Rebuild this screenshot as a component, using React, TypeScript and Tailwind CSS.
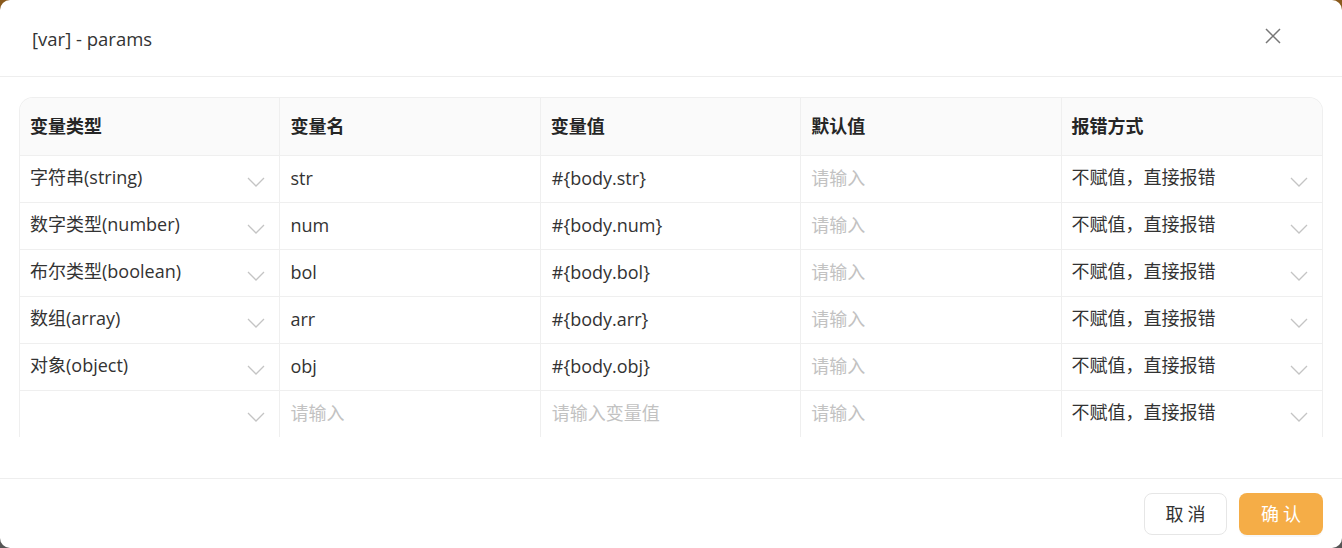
import React from "react";

const font = { fontFamily: '"Open Sans", "Noto Sans CJK SC", sans-serif' };

const Chevron = () => (
  <svg width="18" height="10" viewBox="0 0 18 10" fill="none" className="shrink-0">
    <path d="M1 1 L9 9 L17 1" stroke="#c4c4c4" strokeWidth="1.3" />
  </svg>
);

type Row = { type: string; name: string; value: string };
const rows: Row[] = [
  { type: "字符串(string)", name: "str", value: "#{body.str}" },
  { type: "数字类型(number)", name: "num", value: "#{body.num}" },
  { type: "布尔类型(boolean)", name: "bol", value: "#{body.bol}" },
  { type: "数组(array)", name: "arr", value: "#{body.arr}" },
  { type: "对象(object)", name: "obj", value: "#{body.obj}" },
  { type: "", name: "", value: "" },
];

export default function App() {
  return (
    <div className="w-[1342px] h-[548px] bg-gradient-to-b from-[#8a5a1c] to-[#555555]" style={font}>
      <div className="w-full h-full bg-white rounded-[10px] flex flex-col overflow-hidden">
        <div className="h-[77px] shrink-0 border-b border-[#eeeeee] flex items-center justify-between pl-[32px] pr-[60px]">
          <span className="text-[18.5px] text-[#333333] pt-[1px]">[var] - params</span>
          <svg width="18" height="18" viewBox="0 0 18 18" className="mt-[-4px]">
            <path d="M2 2 L16 16 M16 2 L2 16" stroke="#777777" strokeWidth="1.5" />
          </svg>
        </div>
        <div className="h-[402px] shrink-0 px-[19px] pt-[20px] border-b border-[#eeeeee]">
          <div className="h-[340px] overflow-hidden rounded-t-[14px] border-x border-t border-[#efefef]">
            <div className="grid grid-cols-5 h-[58px] bg-[#fafafa] border-b border-[#efefef]">
              {["变量类型", "变量名", "变量值", "默认值", "报错方式"].map((h, i) => (
                <div
                  key={h}
                  className={`flex items-center pl-[10px] text-[18px] font-bold text-[#262626] ${i < 4 ? "border-r border-[#efefef]" : ""}`}
                >
                  {h}
                </div>
              ))}
            </div>
            {rows.map((r, idx) => (
              <div key={idx} className="grid grid-cols-5 h-[47px] border-b border-[#efefef]">
                <div className="flex items-center justify-between pl-[10px] pr-[14px] border-r border-[#efefef] text-[18px] text-[#333333]">
                  <span className="mt-[-4px]">{r.type}</span>
                  <span className="mt-[6px]"><Chevron /></span>
                </div>
                <div className={`flex items-center pl-[10px] border-r border-[#efefef] text-[18px] ${r.name ? "text-[#333333]" : "text-[#c2c2c2]"}`}>
                  <span className="mt-[-2px]">{r.name || "请输入"}</span>
                </div>
                <div className={`flex items-center pl-[11px] border-r border-[#efefef] text-[18px] ${r.value ? "text-[#333333]" : "text-[#c2c2c2]"}`}>
                  <span className="mt-[-2px]">{r.value || "请输入变量值"}</span>
                </div>
                <div className="flex items-center pl-[10px] border-r border-[#efefef] text-[18px] text-[#c2c2c2]">
                  <span className="mt-[-2px]">请输入</span>
                </div>
                <div className="flex items-center justify-between pl-[10px] pr-[14px] text-[18px] text-[#333333]">
                  <span className="mt-[-4px]">不赋值，直接报错</span>
                  <span className="mt-[6px]"><Chevron /></span>
                </div>
              </div>
            ))}
          </div>
        </div>
        <div className="flex-1 flex items-center justify-end gap-[12px] pr-[19px] pt-[1px]">
          <button className="w-[83px] h-[42px] rounded-[8px] border border-[#e6e6e6] bg-white text-[18px] text-[#333333] tracking-[4px] pl-[4px]">
            取消
          </button>
          <button className="w-[84px] h-[42px] rounded-[8px] bg-[#f5ad47] text-[18px] text-white tracking-[4px] pl-[4px] shadow-[0_2px_0_rgba(0,0,0,0.03)]">
            确认
          </button>
        </div>
      </div>
    </div>
  );
}
